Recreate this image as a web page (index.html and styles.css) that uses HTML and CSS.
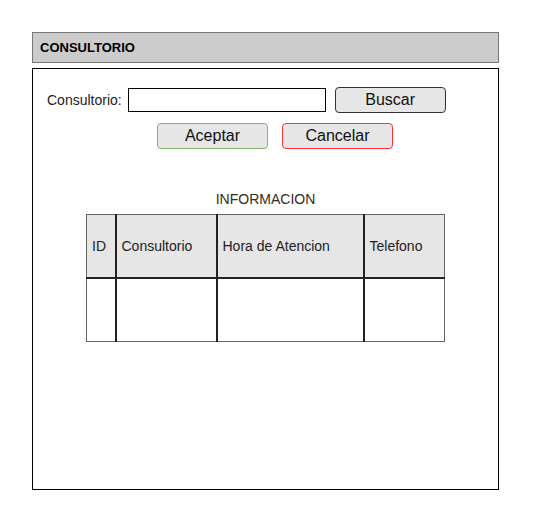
FILE: index.html
```html
<!DOCTYPE html>
<html lang="es">
<head>
<meta charset="UTF-8">
<title>Consultorio</title>
<link rel="stylesheet" href="styles.css">
</head>
<body>
<div class="page">
 <div class="titlebar">CONSULTORIO</div>
 <div class="panel">
  <div class="search-row">
   <label for="consultorio">Consultorio:</label>
   <input id="consultorio" type="text">
   <button class="btn">Buscar</button>
  </div>
  <div class="actions">
   <button class="btn ok">Aceptar</button>
   <button class="btn cancel">Cancelar</button>
  </div>
  <div class="info">INFORMACION</div>
  <table class="grid">
   <tr class="head">
    <td class="c-id">ID</td>
    <td class="c-con">Consultorio</td>
    <td class="c-hora">Hora de Atencion</td>
    <td class="c-tel">Telefono</td>
   </tr>
   <tr class="body">
    <td></td><td></td><td></td><td></td>
   </tr>
  </table>
 </div>
</div>
</body>
</html>
```
FILE: styles.css
```css
body{margin:0;background:#fff;font-family:"Liberation Sans",Arial,Helvetica,sans-serif;color:#000}
.page{padding:32px 0 0 32px;width:467px}
.titlebar{height:29px;line-height:29px;background:#ccc;border:1px solid #777;padding-left:7px;font-weight:bold;font-size:13px}
.panel{margin-top:5px;height:422px;border:1px solid #000;box-sizing:border-box}
.search-row{display:flex;align-items:center;margin:18px 0 0 14px}
.search-row label{font-size:14px;color:#222;margin-right:6px}
.search-row input{width:198px;height:24px;box-sizing:border-box;border:1px solid #000;margin:0;padding:0}
.btn{width:111px;height:26px;box-sizing:border-box;background:#e6e6e6;border:1px solid #333;border-radius:4px;font-family:inherit;font-size:16px;color:#111;padding:0;margin:0}
.search-row .btn{margin-left:9px}
.actions{display:flex;gap:14px;margin:10px 0 0 124px}
.btn.ok{border-color:#82b366}
.btn.cancel{border-color:#f33}
.info{text-align:center;font-size:14px;color:#3a2a1a;margin-top:42px}
.grid{border-collapse:collapse;margin:7px 0 0 53px;font-size:14px;color:#222}
.grid td{border:2px solid #222;height:63px;padding:0 0 0 5px;box-sizing:border-box}
.grid tr.body td{height:64px}
.grid tr.head td{background:#e6e6e6}
.grid td:first-child{border-left:1px solid #666}
.grid td:last-child{border-right:1px solid #666}
.grid tr:first-child td{border-top:1px solid #666}
.grid tr:last-child td{border-bottom:1px solid #666}
.c-id{width:29px}
.c-con{width:101px}
.c-hora{width:147px}
.c-tel{width:81px}
```
